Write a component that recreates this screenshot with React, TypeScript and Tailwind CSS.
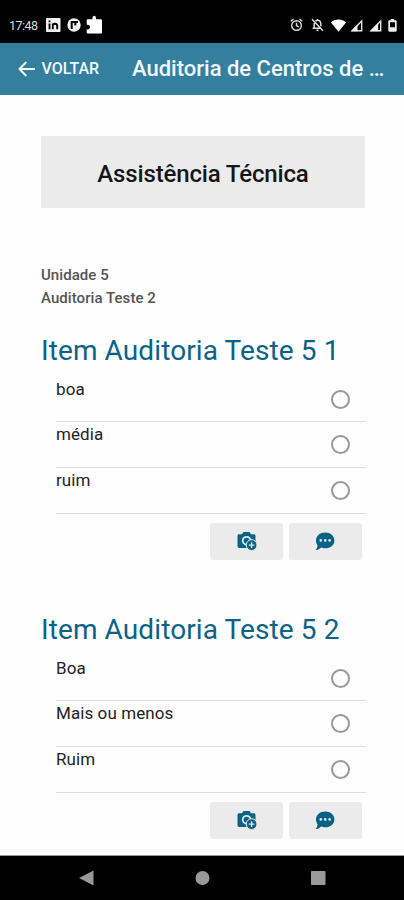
const sections = [
  { title: 'Item Auditoria Teste 5 1', options: ['boa', 'média', 'ruim'] },
  { title: 'Item Auditoria Teste 5 2', options: ['Boa', 'Mais ou menos', 'Ruim'] },
]

function SignalIcon({ fill }: { fill: string }) {
  return (
    <svg width="13" height="13" viewBox="0 0 13 13" fill="none">
      <path d="M2.2 11.8 11.7 1.9v9.9z" stroke="#e4e4e4" strokeWidth="1.4" />
      <path d={fill} fill="#eee" />
    </svg>
  )
}

function StatusBar() {
  return (
    <div className="h-[42.5px] bg-black flex items-start justify-between text-[#ddd] pl-[9px] pr-[7px] pt-[17px]">
      <div className="flex items-center h-4">
        <span className="w-[37px] text-[12.5px] leading-4 tracking-[-0.5px] pt-0.5">17:48</span>
        <svg width="15" height="14" viewBox="0 0 15 14">
          <rect width="14.5" height="14" rx="1" fill="#f1f1f1" />
          <path d="M3.5 5.5v5.8M3.5 2.5v1.7M6.8 11.3V5.5M6.8 8c0-3 4.4-3 4.4 0v3.3" stroke="#000" strokeWidth="1.9" fill="none" />
        </svg>
        <svg className="ml-1.5" width="14" height="14" viewBox="0 0 14 14">
          <circle cx="7" cy="7" r="6.7" fill="#f1f1f1" />
          <path d="M4.7 11V4H11M8.3 4v3.5" stroke="#000" strokeWidth="2" fill="none" />
        </svg>
        <svg className="ml-[5px] -mt-0.5" width="17" height="19" viewBox="0 0 17 19">
          <path
            d="M2 4.2h4.5c-.7-4.7 4.2-4.7 3.5 0h4.7c.8 0 1.3.5 1.3 1.3v11.7c0 .8-.5 1.3-1.3 1.3H2c-.8 0-1.3-.5-1.3-1.3v-2.8c4.5.6 4.5-5.3 0-4.7V5.5c0-.8.5-1.3 1.3-1.3z"
            fill="#fff"
          />
        </svg>
      </div>
      <div className="flex items-center h-4">
        <svg width="13" height="14" viewBox="0 0 13 14" fill="none" stroke="#ddd" strokeWidth="1.4">
          <circle cx="6.5" cy="7.5" r="4.8" />
          <path d="M.7 3.3 3.5 1M12.3 3.3 9.5 1M6.5 4.7v3l2.2 1.3" />
        </svg>
        <svg className="ml-[8px]" width="13" height="14" viewBox="0 0 13 14" fill="none" stroke="#ddd" strokeWidth="1.5">
          <path d="M1 1.2 12 12.8M3.2 5v5.2H1.6M3.2 10.3h6.3M4.5 3.2c2.2-2 5.3-.6 5.3 2.5v2.6M6.5 1v1.4M5.5 12.3h2" />
        </svg>
        <svg className="ml-[7.5px]" width="15" height="13" viewBox="0 0 15 13">
          <path d="M0 3.4C4.4-.4 10.6-.4 15 3.4L7.5 12.8z" fill="#fff" />
        </svg>
        <span className="ml-[4px]">
          <SignalIcon fill="M1 12.3 7.5 5.8v6.5z" />
        </span>
        <span className="ml-[6px]">
          <SignalIcon fill="M1 12.3 9.2 4.1v8.2z" />
        </span>
        <svg className="ml-[6px]" width="9" height="13" viewBox="0 0 9 13">
          <path
            d="M2.8 0h3.4v1.3h1.3c.7 0 1.2.4 1.2 1.2v9c0 .8-.5 1.2-1.2 1.2h-6c-.7 0-1.2-.4-1.2-1.2v-9c0-.8.5-1.2 1.2-1.2h1.3zM2 3.2v5h5v-5z"
            fill="#eee"
            fillRule="evenodd"
          />
        </svg>
      </div>
    </div>
  )
}

function Header() {
  return (
    <header className="h-[52.5px] bg-[#347f9e] text-[#eefaff] flex items-center pl-[18px] font-medium">
      <button className="flex items-center w-[114px]">
        <svg width="17" height="16" viewBox="0 0 17 16" fill="none" stroke="currentColor" strokeWidth="2">
          <path d="M8.3 1 1.5 8l6.8 7M1.5 8H17" />
        </svg>
        <span className="ml-[6.5px] text-[16px] leading-5">VOLTAR</span>
      </button>
      <h1 className="text-[22px] leading-7 whitespace-nowrap">
        Auditoria de Centros de <span className="tracking-[-1.2px]">...</span>
      </h1>
    </header>
  )
}

function CameraIcon() {
  return (
    <svg className="ml-0.5" width="21" height="21" viewBox="0 0 21 21">
      <path d="M2.2 3.2H5L6.4 1h6.2L14 3.2h2.8c1 0 1.7.7 1.7 1.7v12H2.2c-1 0-1.7-.7-1.7-1.7V4.9c0-1 .7-1.7 1.7-1.7z" fill="#0b6287" />
      <circle cx="9.6" cy="9.7" r="3.9" fill="none" stroke="#dcecf1" strokeWidth="1.8" />
      <circle cx="14.6" cy="14.1" r="5.4" fill="#0b6287" stroke="#ebebeb" strokeWidth="1" />
      <path d="M11.8 14.1h5.6M14.6 11.3v5.6" stroke="#d5e6ec" strokeWidth="1.4" />
    </svg>
  )
}

function CommentIcon() {
  return (
    <svg className="-ml-0.5" width="20" height="19" viewBox="0 0 20 19">
      <path
        d="M10.2.5c5.3 0 9.2 3.4 9.2 7.9s-3.9 7.9-9.2 7.9c-1.5 0-2.900-.3-4.100-.8-1.500 1.500-3.200 2.600-5.500 2.600 1.100-1.300 1.900-3 1.900-4.900C1.500 11.900 1 10.200 1 8.400 1 3.900 4.900.5 10.200.5z"
        fill="#0b6287"
      />
      <g fill="#d9ebf1">
        <circle cx="5.8" cy="8.4" r="1.3" />
        <circle cx="10.2" cy="8.4" r="1.3" />
        <circle cx="14.6" cy="8.4" r="1.3" />
      </g>
    </svg>
  )
}

function AuditItem({ title, options }: { title: string; options: string[] }) {
  return (
    <section className="h-[279px] shrink-0">
      <h2 className="text-[28px] leading-9 tracking-[0.1px] text-[#0b6287] whitespace-nowrap">{title}</h2>
      <div className="ml-[15px] -mr-px pt-[7.5px]">
        {options.map((option) => (
          <label key={option} className="flex justify-between h-[45.7px] border-b border-[#dedede] pr-4">
            <span className="text-[17px] leading-5 pt-[2.3px] tracking-[0.08px] text-[#222]">{option}</span>
            <span className="mt-[13px] size-[19px] rounded-full border-2 border-[#999]" />
          </label>
        ))}
      </div>
      <div className="flex justify-end gap-[6px] mt-[9px] pr-[3px]">
        <button className="w-[73px] h-[37.5px] rounded-[3px] bg-[#ebebeb] flex items-center justify-center">
          <CameraIcon />
        </button>
        <button className="w-[73px] h-[37.5px] rounded-[3px] bg-[#ebebeb] flex items-center justify-center">
          <CommentIcon />
        </button>
      </div>
    </section>
  )
}

function NavigationBar() {
  return (
    <nav className="h-[44px] shrink-0 bg-black flex items-center pl-[79px]">
      <svg width="248" height="16" viewBox="0 0 248 16" fill="#999">
        <path d="M0 8 14.5.5v15z" />
        <circle cx="123.5" cy="8" r="7" />
        <rect x="232" y="1" width="14.5" height="14" rx="1" />
      </svg>
    </nav>
  )
}

export default function App() {
  return (
    <div className="w-[404px] h-[900px] bg-[#fefefe] flex flex-col overflow-hidden font-[Roboto,sans-serif]">
      <StatusBar />
      <Header />
      <main className="flex-1 min-h-0 overflow-hidden pl-[41px] pr-[39px] pt-[41px] border-b border-[#999]">
        <div className="h-[72px] bg-[#ebebeb] flex items-center justify-center pt-1">
          <p className="text-[24px] leading-8 font-medium tracking-[-0.15px] text-[#161616]">Assistência Técnica</p>
        </div>
        <div className="mt-[56px] mb-[23px] text-[15px] leading-[23px] font-medium tracking-[0.06px] text-[#555]">
          <p>Unidade 5</p>
          <p>Auditoria Teste 2</p>
        </div>
        {sections.map((section) => (
          <AuditItem key={section.title} title={section.title} options={section.options} />
        ))}
      </main>
      <NavigationBar />
    </div>
  )
}
